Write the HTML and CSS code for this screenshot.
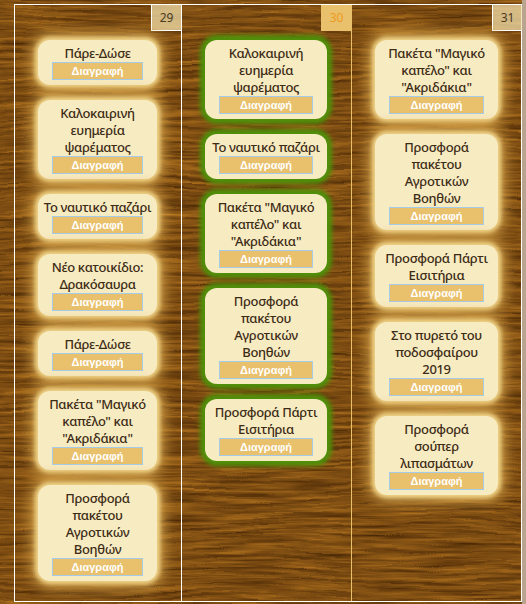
FILE: index.html
```html
<!DOCTYPE html>
<html lang="el">
<head>
  <meta charset="UTF-8">
  <meta name="viewport" content="width=device-width, initial-scale=1.0">
  <title>Ημερολόγιο</title>
  <link rel="stylesheet" href="styles.css">
</head>
<body>
  <div class="wood">
    <div class="calendar">
      <!-- 29 -->
      <div class="day">
        <div class="date">29</div>
        <div class="events">
          <div class="event"><div class="title">Πάρε-Δώσε</div><button class="delete">Διαγραφή</button></div>
          <div class="event"><div class="title">Καλοκαιρινή ευημερία ψαρέματος</div><button class="delete">Διαγραφή</button></div>
          <div class="event"><div class="title">Το ναυτικό παζάρι</div><button class="delete">Διαγραφή</button></div>
          <div class="event"><div class="title">Νέο κατοικίδιο: Δρακόσαυρα</div><button class="delete">Διαγραφή</button></div>
          <div class="event"><div class="title">Πάρε-Δώσε</div><button class="delete">Διαγραφή</button></div>
          <div class="event"><div class="title">Πακέτα "Μαγικό καπέλο" και "Ακριδάκια"</div><button class="delete">Διαγραφή</button></div>
          <div class="event"><div class="title">Προσφορά πακέτου Αγροτικών Βοηθών</div><button class="delete">Διαγραφή</button></div>
        </div>
      </div>
      <!-- 30, today -->
      <div class="day today">
        <div class="date">30</div>
        <div class="events">
          <div class="event"><div class="title">Καλοκαιρινή ευημερία ψαρέματος</div><button class="delete">Διαγραφή</button></div>
          <div class="event"><div class="title">Το ναυτικό παζάρι</div><button class="delete">Διαγραφή</button></div>
          <div class="event"><div class="title">Πακέτα "Μαγικό καπέλο" και "Ακριδάκια"</div><button class="delete">Διαγραφή</button></div>
          <div class="event"><div class="title">Προσφορά πακέτου Αγροτικών Βοηθών</div><button class="delete">Διαγραφή</button></div>
          <div class="event"><div class="title">Προσφορά Πάρτι Εισιτήρια</div><button class="delete">Διαγραφή</button></div>
        </div>
      </div>
      <!-- 31 -->
      <div class="day">
        <div class="date">31</div>
        <div class="events">
          <div class="event"><div class="title">Πακέτα "Μαγικό καπέλο" και "Ακριδάκια"</div><button class="delete">Διαγραφή</button></div>
          <div class="event"><div class="title">Προσφορά πακέτου Αγροτικών Βοηθών</div><button class="delete">Διαγραφή</button></div>
          <div class="event"><div class="title">Προσφορά Πάρτι Εισιτήρια</div><button class="delete">Διαγραφή</button></div>
          <div class="event"><div class="title">Στο πυρετό του ποδοσφαίρου 2019</div><button class="delete">Διαγραφή</button></div>
          <div class="event"><div class="title">Προσφορά σούπερ λιπασμάτων</div><button class="delete">Διαγραφή</button></div>
        </div>
      </div>
    </div>
  </div>
</body>
</html>
```

FILE: styles.css
```css
html, body {
  margin: 0;
  height: 604px;
  overflow: hidden;
  background-color: #b9a48f;
  font-family: "Noto Sans", "Open Sans", sans-serif;
}

.wood {
  width: 522px;
  height: 604px;
  box-sizing: border-box;
  padding: 4px 0 2px 14px;
  background-color: #7b4a10;
  background-image: url("data:image/svg+xml,%3Csvg xmlns='http://www.w3.org/2000/svg' width='522' height='604'%3E%3Cfilter id='w' x='-10%25' y='-10%25' width='120%25' height='120%25' color-interpolation-filters='sRGB'%3E%3CfeTurbulence type='fractalNoise' baseFrequency='0.006 0.02' numOctaves='2' seed='3' result='d'/%3E%3CfeTurbulence type='fractalNoise' baseFrequency='0.014 0.3' numOctaves='4' seed='7' result='g'/%3E%3CfeDisplacementMap in='g' in2='d' scale='16' xChannelSelector='R' yChannelSelector='G'/%3E%3CfeColorMatrix values='0.5 0 0 0 0.24 0.36 0 0 0 0.12 0.12 0 0 0 0.01 0 0 0 0 1'/%3E%3C/filter%3E%3Crect x='-40' y='-40' width='602' height='684' filter='url(%23w)'/%3E%3C/svg%3E");
}

.calendar {
  display: grid;
  grid-template-columns: 167px 170px 170px;
  width: 508px;
  height: 598px;
  box-sizing: border-box;
  border: 1px solid #fff;
}

.day {
  display: flex;
  flex-direction: column;
  border-right: 1px solid #fff;
  min-width: 0;
}

.day:last-child {
  border-right: none;
}

.day.today {
  border-right-color: #e9c06b;
}

.date {
  align-self: flex-end;
  width: 29px;
  height: 25px;
  line-height: 25px;
  text-align: center;
  font-size: 12px;
  color: #4a3a20;
  background-color: rgba(240, 222, 170, 0.75);
  border-left: 1px solid #fff;
  border-bottom: 1px solid #fff;
}

.today .date {
  color: #ee9a1e;
  background-color: #e9c06b;
  border-color: #e9c06b;
}

.events {
  display: flex;
  flex-direction: column;
  gap: 15px;
  padding: 9px 24px 0 23px;
}

.event {
  padding: 5px 0;
  background-color: #f7ebc2;
  border-radius: 12px;
  text-align: center;
  box-shadow: 0 0 4px 3px #efd48a, 0 0 14px 7px rgba(215, 165, 75, 0.9);
}

.today .event {
  box-shadow: 0 0 4px 5px #4f900a;
}

.title {
  max-width: 108px;
  margin: 0 auto;
  font-size: 13px;
  line-height: 17px;
  font-weight: 500;
  letter-spacing: -0.35px;
  color: #3d2b16;
}

.delete {
  display: block;
  width: calc(100% - 28px);
  height: 18px;
  margin: 0 auto;
  padding: 0;
  box-sizing: border-box;
  background-color: #e9c06b;
  border: 1px solid #a6cbe8;
  color: #fff;
  font-family: "Liberation Sans", sans-serif;
  font-size: 11px;
  font-weight: bold;
  cursor: pointer;
}
```
